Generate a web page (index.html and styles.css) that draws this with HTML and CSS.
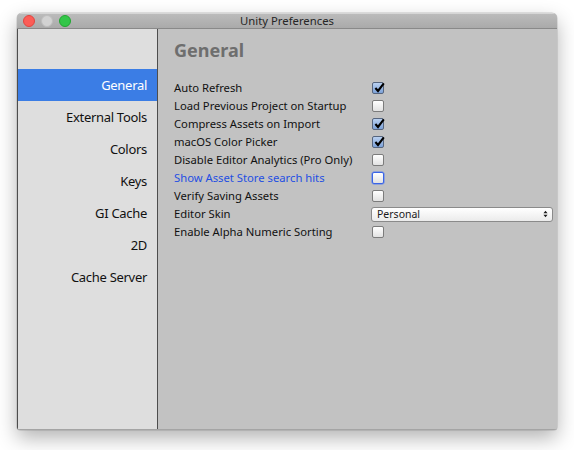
FILE: index.html
```html
<!DOCTYPE html>
<html>
<head>
<meta charset="utf-8">
<link rel="stylesheet" href="styles.css">
</head>
<body>
<div class="window">
  <div class="titlebar">
    <div class="lights">
      <span class="light red"></span>
      <span class="light grey"></span>
      <span class="light green"></span>
    </div>
    <div class="title">Unity Preferences</div>
  </div>
  <div class="body">
    <nav class="sidebar">
      <div class="item active">General</div>
      <div class="item">External Tools</div>
      <div class="item">Colors</div>
      <div class="item">Keys</div>
      <div class="item">GI Cache</div>
      <div class="item">2D</div>
      <div class="item">Cache Server</div>
    </nav>
    <main class="main">
      <h1 class="heading">General</h1>
      <div class="row"><span class="label">Auto Refresh</span><span class="cb checked"><svg viewBox="0 0 12 12"><path d="M2.4 6 L5 9 L10.8 1.4"/></svg></span></div>
      <div class="row"><span class="label">Load Previous Project on Startup</span><span class="cb"></span></div>
      <div class="row"><span class="label">Compress Assets on Import</span><span class="cb checked"><svg viewBox="0 0 12 12"><path d="M2.4 6 L5 9 L10.8 1.4"/></svg></span></div>
      <div class="row"><span class="label">macOS Color Picker</span><span class="cb checked"><svg viewBox="0 0 12 12"><path d="M2.4 6 L5 9 L10.8 1.4"/></svg></span></div>
      <div class="row"><span class="label">Disable Editor Analytics (Pro Only)</span><span class="cb"></span></div>
      <div class="row"><span class="label link">Show Asset Store search hits</span><span class="cb focus"></span></div>
      <div class="row"><span class="label">Verify Saving Assets</span><span class="cb"></span></div>
      <div class="row"><span class="label">Editor Skin</span><span class="select"><span class="select-text">Personal</span><svg class="arrows" viewBox="0 0 6 9"><path d="M3 0.5 L5.5 3.5 L0.5 3.5 Z M3 8.5 L5.5 5.5 L0.5 5.5 Z"/></svg></span></div>
      <div class="row"><span class="label">Enable Alpha Numeric Sorting</span><span class="cb"></span></div>
    </main>
  </div>
</div>
</body>
</html>
```
FILE: styles.css
```css
html, body {
  margin: 0;
  padding: 0;
  background: #ffffff;
}

body {
  font-family: "Noto Sans", "DejaVu Sans", sans-serif;
  padding: 13px 0 0 17px;
  min-height: 450px;
  box-sizing: border-box;
}

.window {
  width: 540px;
  height: 417px;
  display: flex;
  flex-direction: column;
  border-radius: 5px 5px 3px 3px;
  box-shadow: 0 8px 20px rgba(0, 0, 0, 0.3), 0 0 0 0.5px rgba(0, 0, 0, 0.18);
  overflow: hidden;
  background: #c2c2c2;
}

.titlebar {
  position: relative;
  height: 15px;
  flex: none;
  background: linear-gradient(#bcbcbc, #aaaaaa);
  border-bottom: 1px solid #898989;
  box-shadow: inset 0 1px 0 #d6d6d6;
  display: flex;
  align-items: center;
  justify-content: center;
}

.lights {
  position: absolute;
  left: 5.5px;
  top: 1.5px;
  display: flex;
  gap: 6px;
}

.light {
  width: 12px;
  height: 12px;
  border-radius: 50%;
  box-sizing: border-box;
}

.red {
  background: #fc5d57;
  border: 0.5px solid #df4640;
}

.grey {
  background: #d2d2d2;
  border: 0.5px solid #bdbdbd;
}

.green {
  background: #33c649;
  border: 0.5px solid #22a631;
}

.title {
  font-size: 11.3px;
  line-height: 15px;
  color: #262626;
}

.body {
  flex: 1;
  display: flex;
  border-bottom: 1px solid #a4a4a4;
}

.sidebar {
  width: 139px;
  flex: none;
  background: #dedede;
  border-left: 1px solid #4d4d4d;
  border-right: 1px solid #4d4d4d;
  padding-top: 40px;
}

.item {
  height: 32px;
  line-height: 32px;
  font-size: 13px;
  letter-spacing: -0.3px;
  text-align: right;
  padding-right: 10px;
  color: #111111;
}

.item.active {
  background: #3b7de5;
  color: #ffffff;
}

.main {
  flex: 1;
  padding: 9px 4px 0 16px;
}

.heading {
  margin: 0 0 16px 0;
  height: 25px;
  font-size: 18px;
  line-height: 25px;
  font-weight: bold;
  color: #6e6e6e;
}

.row {
  height: 18px;
  display: flex;
  align-items: center;
}

.label {
  width: 198px;
  flex: none;
  font-size: 11.25px;
  line-height: 18px;
  color: #111111;
  white-space: nowrap;
}

.label.link {
  color: #1f4fe2;
}

.cb {
  width: 12px;
  height: 12px;
  box-sizing: border-box;
  border: 1px solid #7c7c7c;
  border-radius: 2px;
  background: linear-gradient(#ffffff, #e2e2e2);
  display: flex;
  position: relative;
}

.cb.checked {
  background: linear-gradient(#b9d0f0, #7da2d8);
  border-color: #56657e;
}

.cb.focus {
  border: 1px solid #3a64e6;
  box-shadow: 0 0 0 0.5px #5b80ee;
}

.cb svg {
  position: absolute;
  left: 0;
  top: -1px;
  width: 12px;
  height: 12px;
  fill: none;
  stroke: #000000;
  stroke-width: 2.1;
}

.select {
  margin-left: -1px;
  width: 182px;
  height: 15px;
  box-sizing: border-box;
  border: 1px solid #8a8a8a;
  border-radius: 3px;
  background: linear-gradient(#ffffff, #ebebeb);
  display: flex;
  align-items: center;
  justify-content: space-between;
  padding: 0 4px 0 5px;
}

.select-text {
  font-size: 10.5px;
  line-height: 13px;
  color: #1a1a1a;
}

.arrows {
  width: 5px;
  height: 8px;
  fill: #1a1a1a;
}
```
